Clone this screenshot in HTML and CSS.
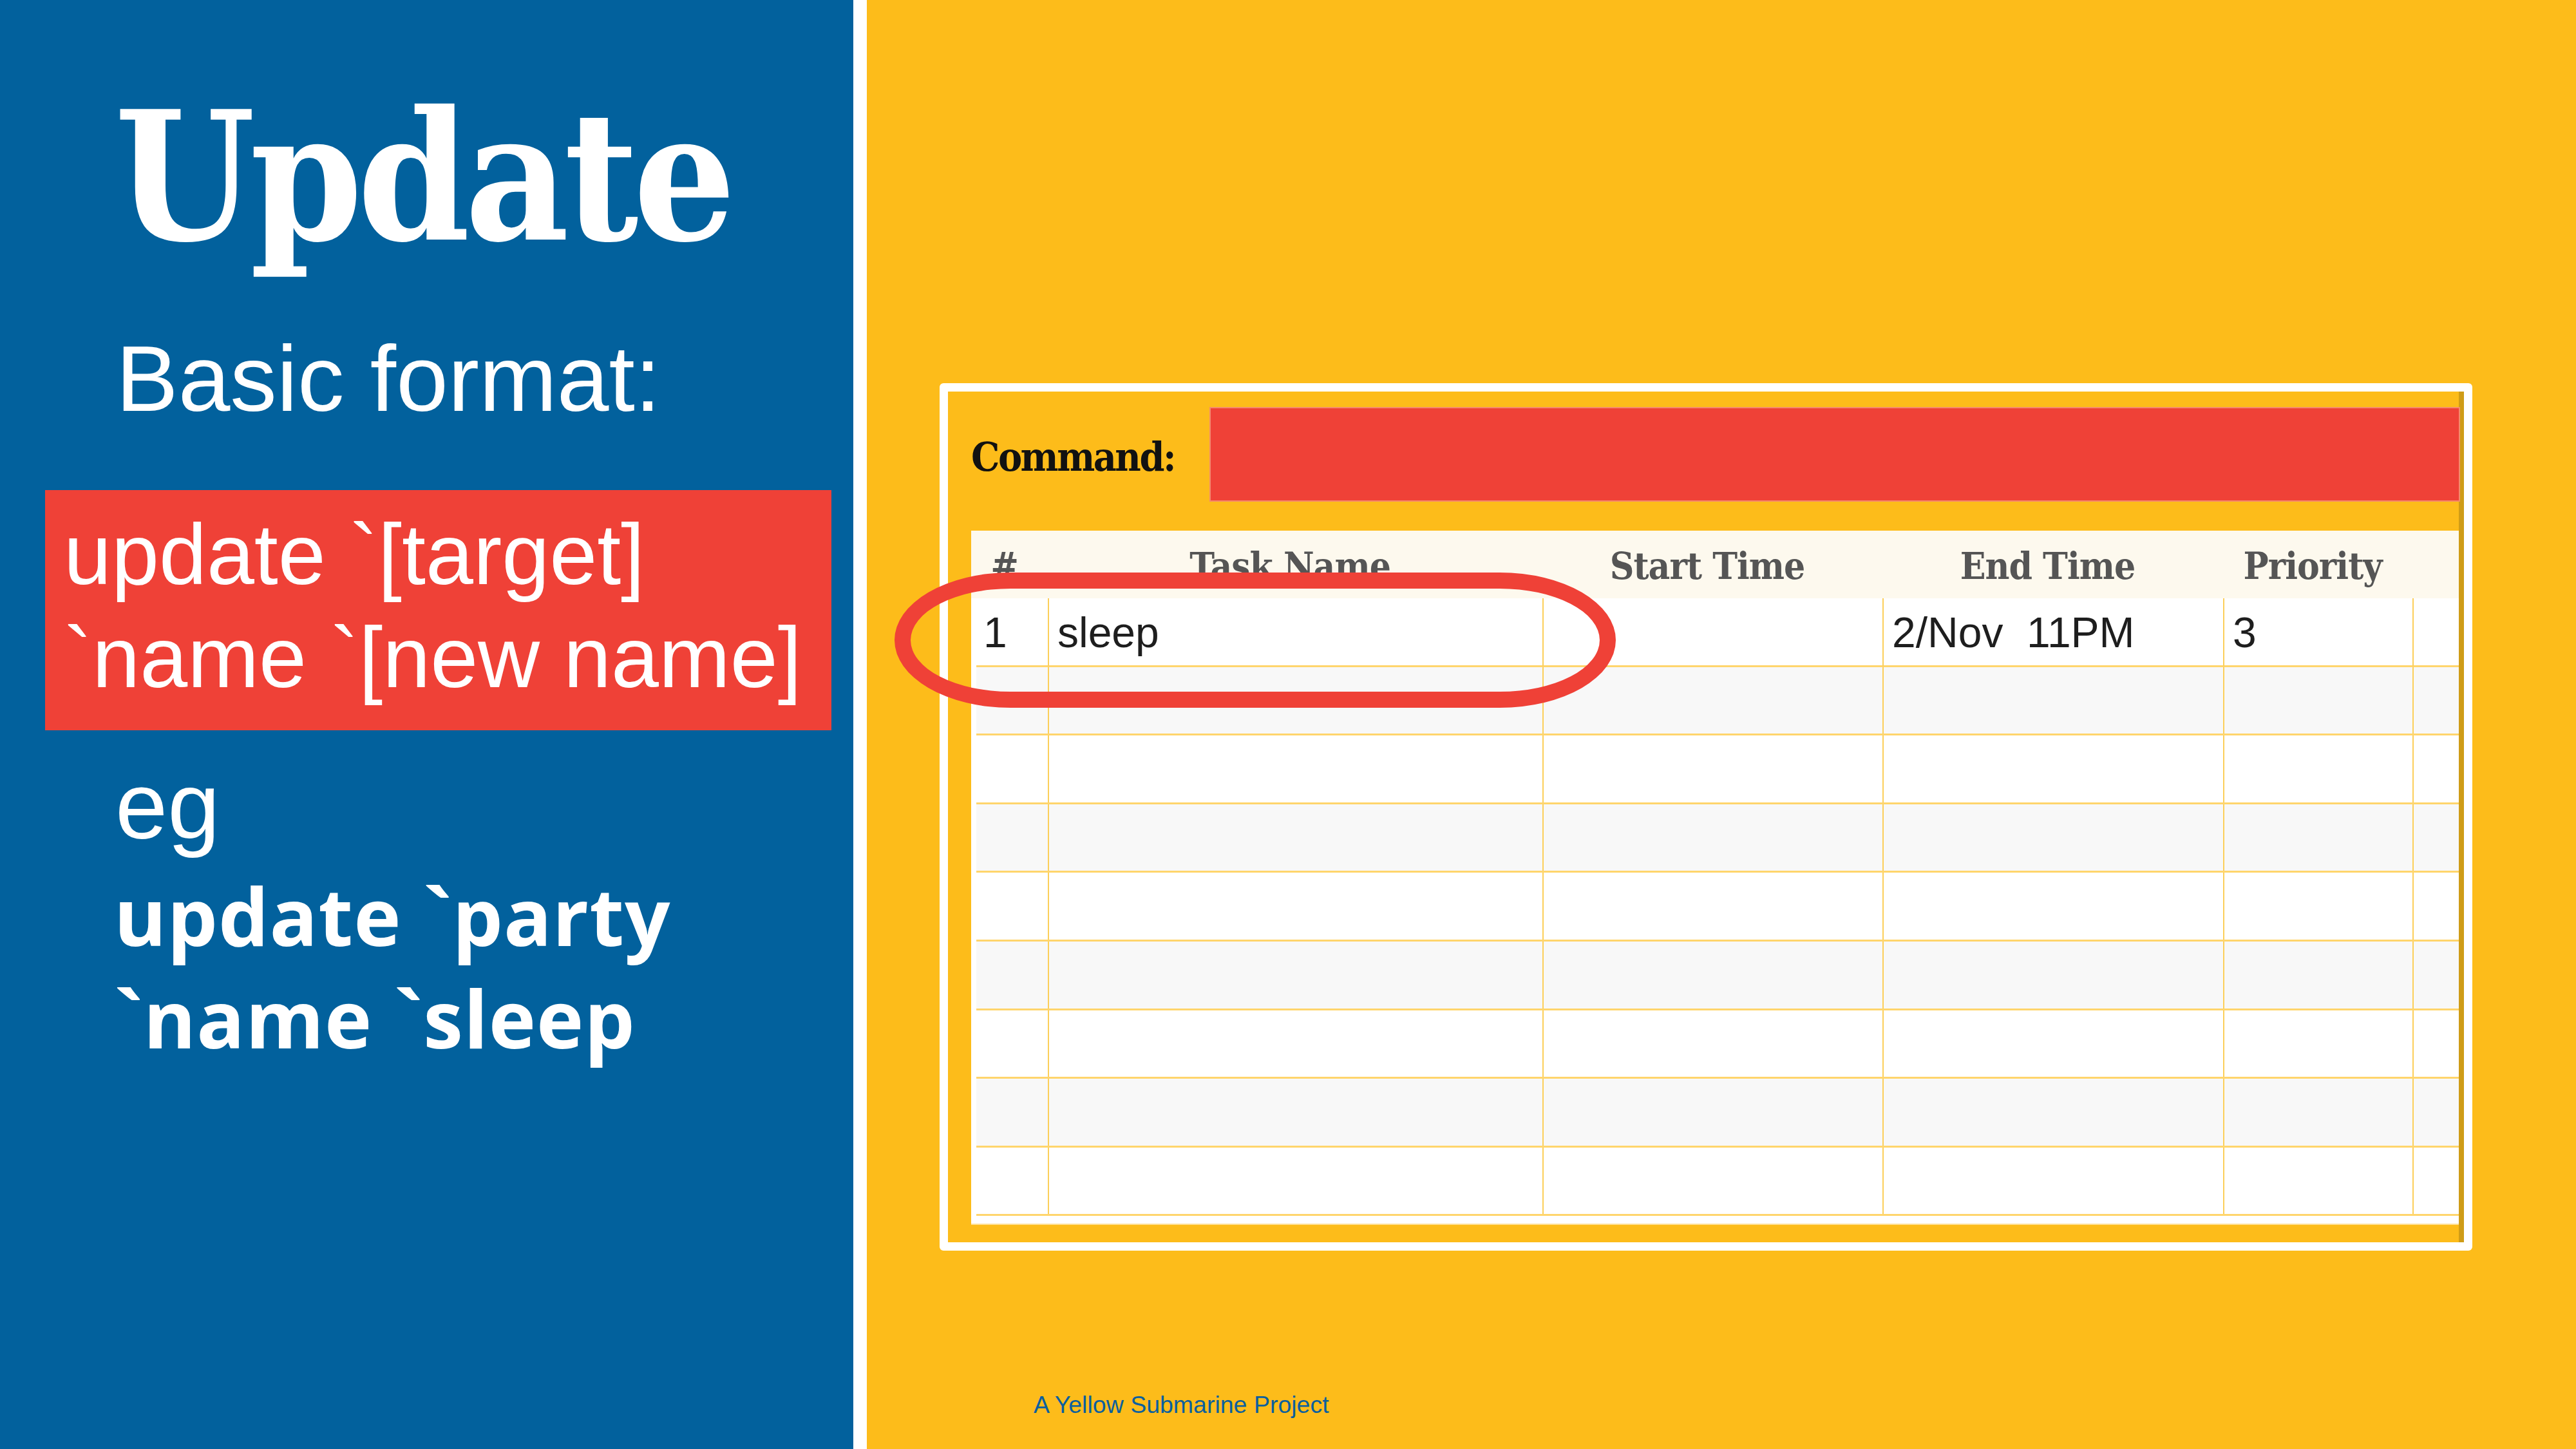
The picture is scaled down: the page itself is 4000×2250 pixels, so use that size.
FILE: index.html
```html
<!DOCTYPE html>
<html>
<head>
<meta charset="utf-8">
<link rel="stylesheet" href="styles.css">
</head>
<body>
<div class="slide">
  <section class="left">
    <h1 class="title">Update</h1>
    <p class="basic">Basic format:</p>
    <div class="format-box">update `[target]<br>`name `[new name]</div>
    <p class="eg">eg</p>
    <p class="example">update `party<br>`name `sleep</p>
  </section>
  <div class="divider"></div>
  <section class="right">
    <div class="frame">
      <div class="inner">
        <div class="command-row">
          <span class="command-label">Command:</span>
          <div class="command-input"></div>
        </div>
        <div class="table">
          <div class="row head">
            <div class="th">#</div>
            <div class="th">Task Name</div>
            <div class="th">Start Time</div>
            <div class="th">End Time</div>
            <div class="th">Priority</div>
            <div class="th"></div>
          </div>
          <div class="body">
            <div class="row"><div class="td num">1</div><div class="td">sleep</div><div class="td"></div><div class="td">2/Nov&nbsp;&nbsp;11PM</div><div class="td">3</div><div class="td"></div></div>
            <div class="row alt"><div class="td num"></div><div class="td"></div><div class="td"></div><div class="td"></div><div class="td"></div><div class="td"></div></div>
            <div class="row"><div class="td num"></div><div class="td"></div><div class="td"></div><div class="td"></div><div class="td"></div><div class="td"></div></div>
            <div class="row alt"><div class="td num"></div><div class="td"></div><div class="td"></div><div class="td"></div><div class="td"></div><div class="td"></div></div>
            <div class="row"><div class="td num"></div><div class="td"></div><div class="td"></div><div class="td"></div><div class="td"></div><div class="td"></div></div>
            <div class="row alt"><div class="td num"></div><div class="td"></div><div class="td"></div><div class="td"></div><div class="td"></div><div class="td"></div></div>
            <div class="row"><div class="td num"></div><div class="td"></div><div class="td"></div><div class="td"></div><div class="td"></div><div class="td"></div></div>
            <div class="row alt"><div class="td num"></div><div class="td"></div><div class="td"></div><div class="td"></div><div class="td"></div><div class="td"></div></div>
            <div class="row"><div class="td num"></div><div class="td"></div><div class="td"></div><div class="td"></div><div class="td"></div><div class="td"></div></div>
          </div>
        </div>
        <div class="highlight"></div>
      </div>
    </div>
    <p class="footer">A Yellow Submarine Project</p>
  </section>
</div>
</body>
</html>
```

FILE: styles.css
```css
html, body {
  margin: 0;
  padding: 0;
}
body {
  width: 4000px;
  height: 2250px;
  overflow: hidden;
  background: #fdbc1a;
}
.slide {
  display: flex;
  width: 4000px;
  height: 2250px;
}
.left {
  width: 1325px;
  flex: none;
  background: #02619d;
  color: #fff;
  padding-top: 125px;
  box-sizing: border-box;
}
.title {
  margin: 0;
  padding-left: 178px;
  font-family: "DejaVu Serif Condensed", "DejaVu Serif", serif;
  font-stretch: condensed;
  font-weight: bold;
  font-size: 278px;
  line-height: 300px;
  letter-spacing: -8px;
}
.basic {
  margin: 78px 0 0 0;
  padding-left: 180px;
  font-family: "Liberation Sans", Arial, sans-serif;
  font-size: 145px;
  line-height: 170px;
}
.format-box {
  margin: 88px 0 0 70px;
  width: 1221px;
  box-sizing: border-box;
  background: #ef4137;
  padding: 20px 0 33px 29px;
  font-family: "Liberation Sans", Arial, sans-serif;
  font-size: 133px;
  line-height: 160px;
  white-space: nowrap;
}
.eg {
  margin: 33px 0 0 0;
  padding-left: 179px;
  font-family: "Liberation Sans", Arial, sans-serif;
  font-size: 146px;
  line-height: 170px;
}
.example {
  margin: 4px 0 0 0;
  padding-left: 177px;
  font-family: "Open Sans", sans-serif;
  font-weight: 700;
  font-size: 124px;
  line-height: 159px;
  letter-spacing: 1px;
}
.divider {
  width: 21px;
  flex: none;
  background: #fff;
}
.right {
  flex: 1;
  background: #fdbc1a;
  padding: 595px 0 0 113px;
  box-sizing: border-box;
}
.frame {
  width: 2380px;
  border: 13px solid #fff;
  border-radius: 6px;
  box-sizing: border-box;
}
.inner {
  position: relative;
  background: #fdbc1a;
  border-right: 8px solid #cf9c17;
  padding: 26px 0 27px 36px;
}
.command-row {
  display: flex;
  align-items: center;
  height: 143px;
}
.command-label {
  width: 372px;
  flex: none;
  padding-top: 8px;
  font-family: "DejaVu Serif Condensed", "DejaVu Serif", serif;
  font-stretch: condensed;
  font-weight: bold;
  font-size: 62px;
  color: #111;
  letter-spacing: -2.5px;
}
.command-input {
  flex: 1;
  align-self: stretch;
  background: #ef4137;
  box-shadow: 0 0 0 2px #f48a6c;
}
.table {
  margin-top: 47px;
  background: #fff;
}
.row {
  display: grid;
  grid-template-columns: 119px 768px 528px 529px 294px 1fr;
}
.head {
  height: 105px;
  background: #fdf9ee;
}
.th {
  padding: 6px 16px 0 0;
  text-align: center;
  font-family: "DejaVu Serif Condensed", "DejaVu Serif", serif;
  font-stretch: condensed;
  font-weight: bold;
  font-size: 58px;
  line-height: 99px;
  color: #555;
  letter-spacing: -1px;
}
.body {
  padding-bottom: 12px;
  border-bottom: 2px solid #ffe29a;
}
.body .row {
  height: 106.6px;
  box-sizing: border-box;
  border-bottom: 3px solid #ffd56c;
  margin-left: 8px;
  grid-template-columns: 111px 768px 528px 529px 294px 1fr;
}
.body .row.alt {
  background: #f8f8f8;
}
.td {
  border-left: 2px solid #fccf5a;
  padding-left: 13px;
  font-family: "Liberation Sans", Arial, sans-serif;
  font-size: 66px;
  line-height: 106px;
  color: #1e1e1e;
  white-space: nowrap;
}
.td.num {
  border-left: none;
  padding-left: 11px;
}
.highlight {
  position: absolute;
  left: -83px;
  top: 281px;
  width: 1120px;
  height: 210px;
  box-sizing: border-box;
  border: 25px solid #ef4137;
  border-radius: 180px / 105px;
}
.footer {
  margin: 217px 0 0 0;
  padding-left: 146px;
  font-family: "Liberation Sans", Arial, sans-serif;
  font-size: 37.5px;
  line-height: 45px;
  color: #0b5f9e;
}
```
